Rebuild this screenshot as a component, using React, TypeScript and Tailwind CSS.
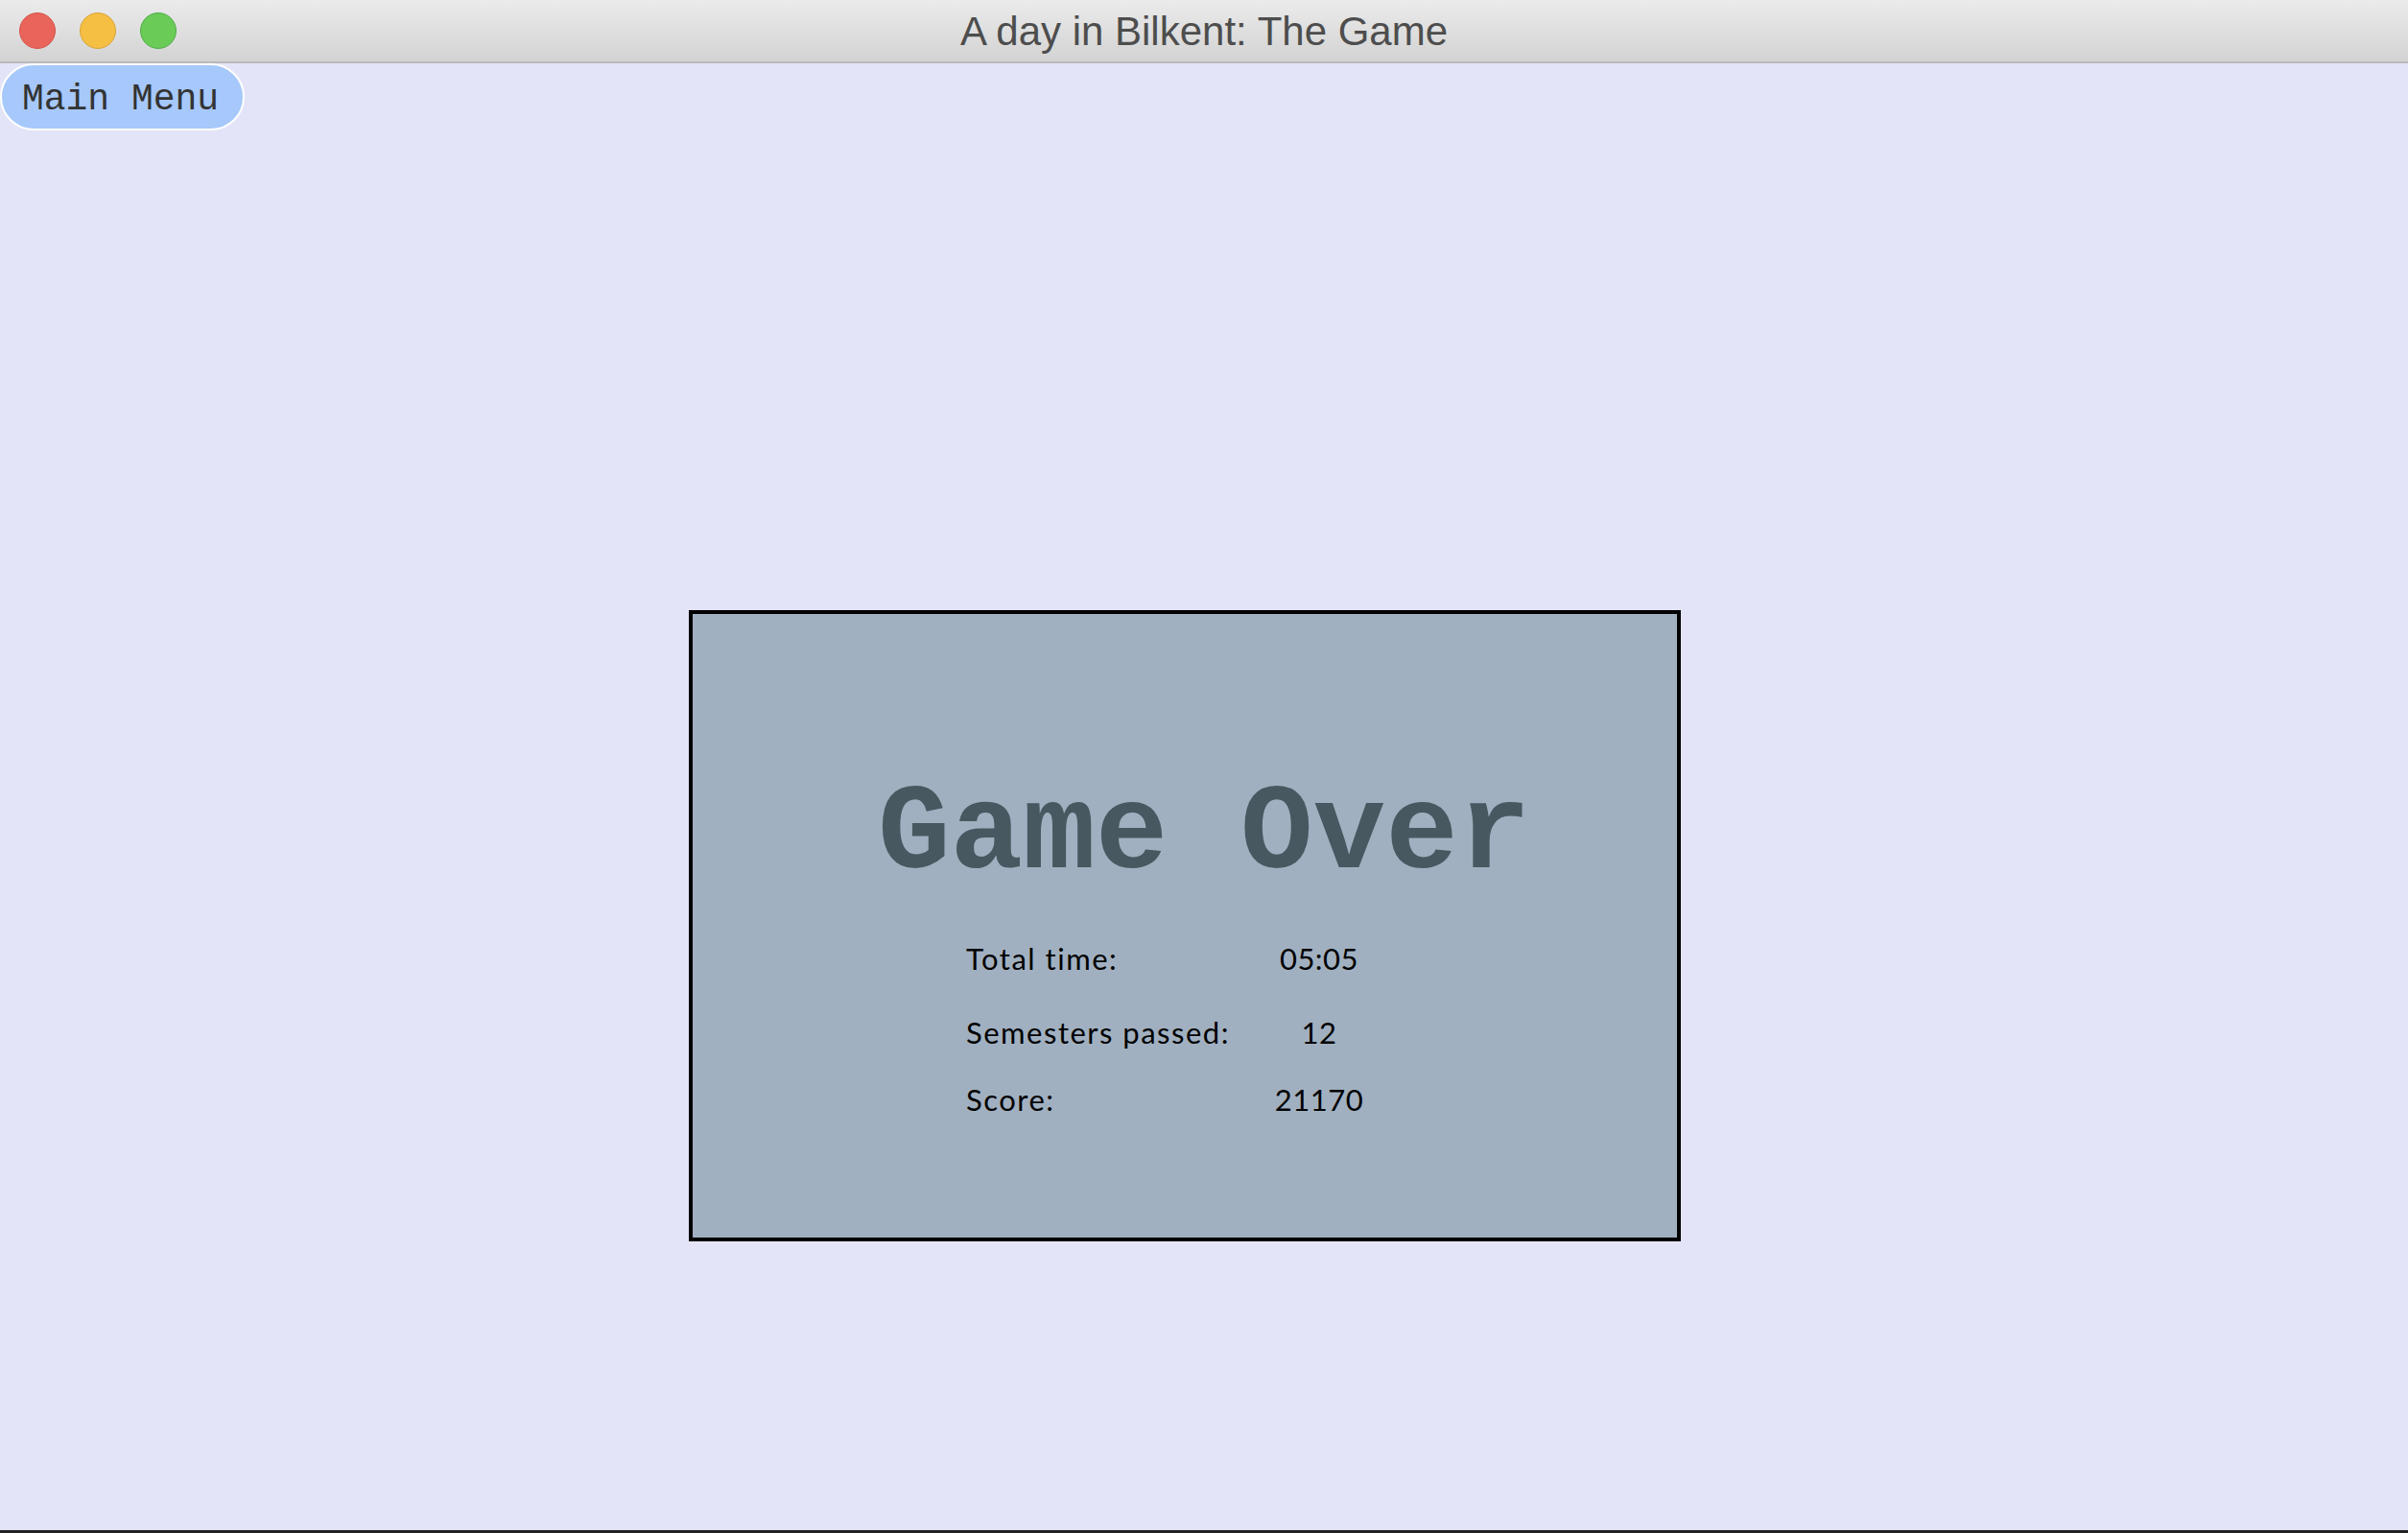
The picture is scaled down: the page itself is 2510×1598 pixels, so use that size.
export default function App() {
  const stats = [
    { label: 'Total time:', value: '05:05', gap: 'mt-0' },
    { label: 'Semesters passed:', value: '12', gap: 'mt-[46px]' },
    { label: 'Score:', value: '21170', gap: 'mt-[39px]' },
  ]

  return (
    <div className="flex h-[1598px] w-[2510px] flex-col overflow-hidden bg-[#e4e4f8]">
      {/* window title bar */}
      <div className="relative flex h-[66px] shrink-0 items-center justify-center border-b-2 border-[#b9b9b9] bg-gradient-to-b from-[#ebebeb] to-[#d3d3d3]">
        <div className="absolute left-[20px] top-[13px] flex gap-[25px]">
          <span className="h-[38px] w-[38px] rounded-full border border-[#d4544a] bg-[#e9645a]"></span>
          <span className="h-[38px] w-[38px] rounded-full border border-[#d9a53a] bg-[#f4bf42]"></span>
          <span className="h-[38px] w-[38px] rounded-full border border-[#4fad44] bg-[#6acb57]"></span>
        </div>
        <h1 className="font-['Liberation_Sans',sans-serif] text-[42px] text-[#4d4d4d]">
          A day in Bilkent: The Game
        </h1>
      </div>

      <div className="flex flex-1 flex-col">
        <div>
          <button className="flex h-[70px] w-[255px] items-center justify-center rounded-full border-2 border-white bg-[#a6c8fa] pr-[4px] pt-[5px] font-['Liberation_Mono',monospace] text-[38px] text-[#333]">
            Main Menu
          </button>
        </div>

        <div className="ml-[718px] mt-[500px] flex h-[658px] w-[1034px] flex-col border-4 border-black bg-[#a1b0c0]">
          <div className="mt-[168px] pl-[193px] font-['Liberation_Mono',monospace] text-[126px] font-bold leading-none text-[#485860]">
            Game Over
          </div>
          <div className="mt-[50px] flex flex-col pl-[285px] font-['Lato',sans-serif] text-[31px] leading-none text-black">
            {stats.map((s) => (
              <div key={s.label} className={`flex ${s.gap}`}>
                <span className="w-[310px] tracking-[1.5px]">{s.label}</span>
                <span className="w-[116px] text-center tracking-[0.5px]">{s.value}</span>
              </div>
            ))}
          </div>
        </div>
      </div>
      <div className="h-[3px] shrink-0 bg-[#222]"></div>
    </div>
  )
}
